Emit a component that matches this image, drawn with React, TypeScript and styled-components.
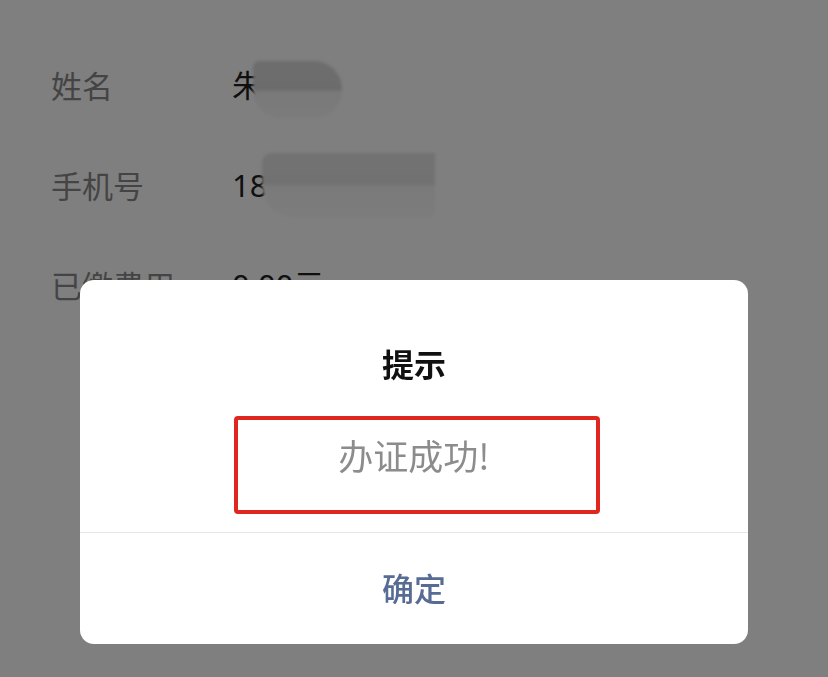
import styled, { createGlobalStyle } from 'styled-components';

const GlobalStyle = createGlobalStyle`
  html, body {
    margin: 0;
    padding: 0;
    background: #7f7f7f;
  }
  body {
    font-family: 'Noto Sans', 'Noto Sans CJK SC', sans-serif;
  }
`;

const rows = [
  { label: '姓名', value: '朱', mask: { left: 21, top: -4, width: 89, height: 57, shape: 'name' } },
  { label: '手机号', value: '18', mask: { left: 30, top: -12, width: 173, height: 64, shape: 'phone' } },
  { label: '已缴费用', value: '0.00元', mask: null },
];

function App() {
  return (
    <>
      <GlobalStyle />
      <Page>
        <InfoList>
          {rows.map((row) => (
            <Row key={row.label}>
              <Label>{row.label}</Label>
              <Value>
                {row.value}
                {row.mask && (
                  <Mask
                    $shape={row.mask.shape}
                    style={{
                      left: row.mask.left,
                      top: row.mask.top,
                      width: row.mask.width,
                      height: row.mask.height,
                    }}
                  />
                )}
              </Value>
            </Row>
          ))}
        </InfoList>
      </Page>
      <Overlay>
        <Dialog>
          <Body>
            <Title>提示</Title>
            <MessageBox>
              <Message>办证成功!</Message>
            </MessageBox>
          </Body>
          <Footer>
            <ConfirmButton>确定</ConfirmButton>
          </Footer>
        </Dialog>
      </Overlay>
    </>
  );
}

const Page = styled.div`
  min-height: 677px;
  background: #7f7f7f;
  padding-top: 35px;
  box-sizing: border-box;
`;

const InfoList = styled.ul`
  list-style: none;
  margin: 0;
  padding: 0 0 0 51px;
`;

const Row = styled.li`
  display: flex;
  align-items: center;
  height: 100px;
`;

const Label = styled.span`
  width: 181px;
  font-family: 'Noto Sans CJK SC', sans-serif;
  font-size: 31px;
  line-height: 40px;
  color: #444444;
`;

const Value = styled.span`
  position: relative;
  font-family: 'Noto Sans', 'Noto Sans CJK SC', sans-serif;
  font-size: 31px;
  line-height: 40px;
  color: #101010;
`;

const Mask = styled.span<{ $shape: string }>`
  position: absolute;
  filter: blur(1.5px);
  border-radius: ${(p) => (p.$shape === 'name' ? '6px 28px 28px 28px' : '10px 0 6px 32px')};
  background: ${(p) =>
    p.$shape === 'name'
      ? 'linear-gradient(180deg, #6d6d6d 0%, #6c6c6c 50%, #797979 54%, #7b7b7b 100%)'
      : 'linear-gradient(180deg, #727272 0%, #717171 48%, #7a7a7a 52%, #7c7c7c 100%)'};
`;

const Overlay = styled.div`
  position: fixed;
  inset: 0;
  display: flex;
  justify-content: center;
  align-items: flex-start;
  padding-top: 280px;
`;

const Dialog = styled.div`
  width: 668px;
  background: #ffffff;
  border-radius: 14px;
  overflow: hidden;
`;

const Body = styled.div`
  display: flex;
  flex-direction: column;
  align-items: center;
  padding: 63px 0 18px;
`;

const Title = styled.h2`
  margin: 0 0 33px;
  font-family: 'Noto Sans CJK SC', sans-serif;
  font-size: 32px;
  line-height: 40px;
  font-weight: 700;
  color: #111111;
`;

const MessageBox = styled.div`
  width: 366px;
  height: 98px;
  margin-left: 6px;
  box-sizing: border-box;
  border: 4px solid #e0271f;
  border-radius: 4px;
  display: flex;
  justify-content: center;
  padding: 15px 6px 0 0;
`;

const Message = styled.p`
  margin: 0;
  font-family: 'Noto Sans CJK SC', sans-serif;
  font-size: 35px;
  line-height: 40px;
  color: #8c8c8c;
`;

const Footer = styled.div`
  height: 111px;
  border-top: 1px solid #e6e6e6;
  display: flex;
  align-items: center;
  justify-content: center;
`;

const ConfirmButton = styled.button`
  border: none;
  background: none;
  padding: 0 0 4px;
  font-family: 'Noto Sans CJK SC', sans-serif;
  font-size: 32px;
  line-height: 40px;
  font-weight: 500;
  color: #576b95;
  cursor: pointer;
`;

export default App;
